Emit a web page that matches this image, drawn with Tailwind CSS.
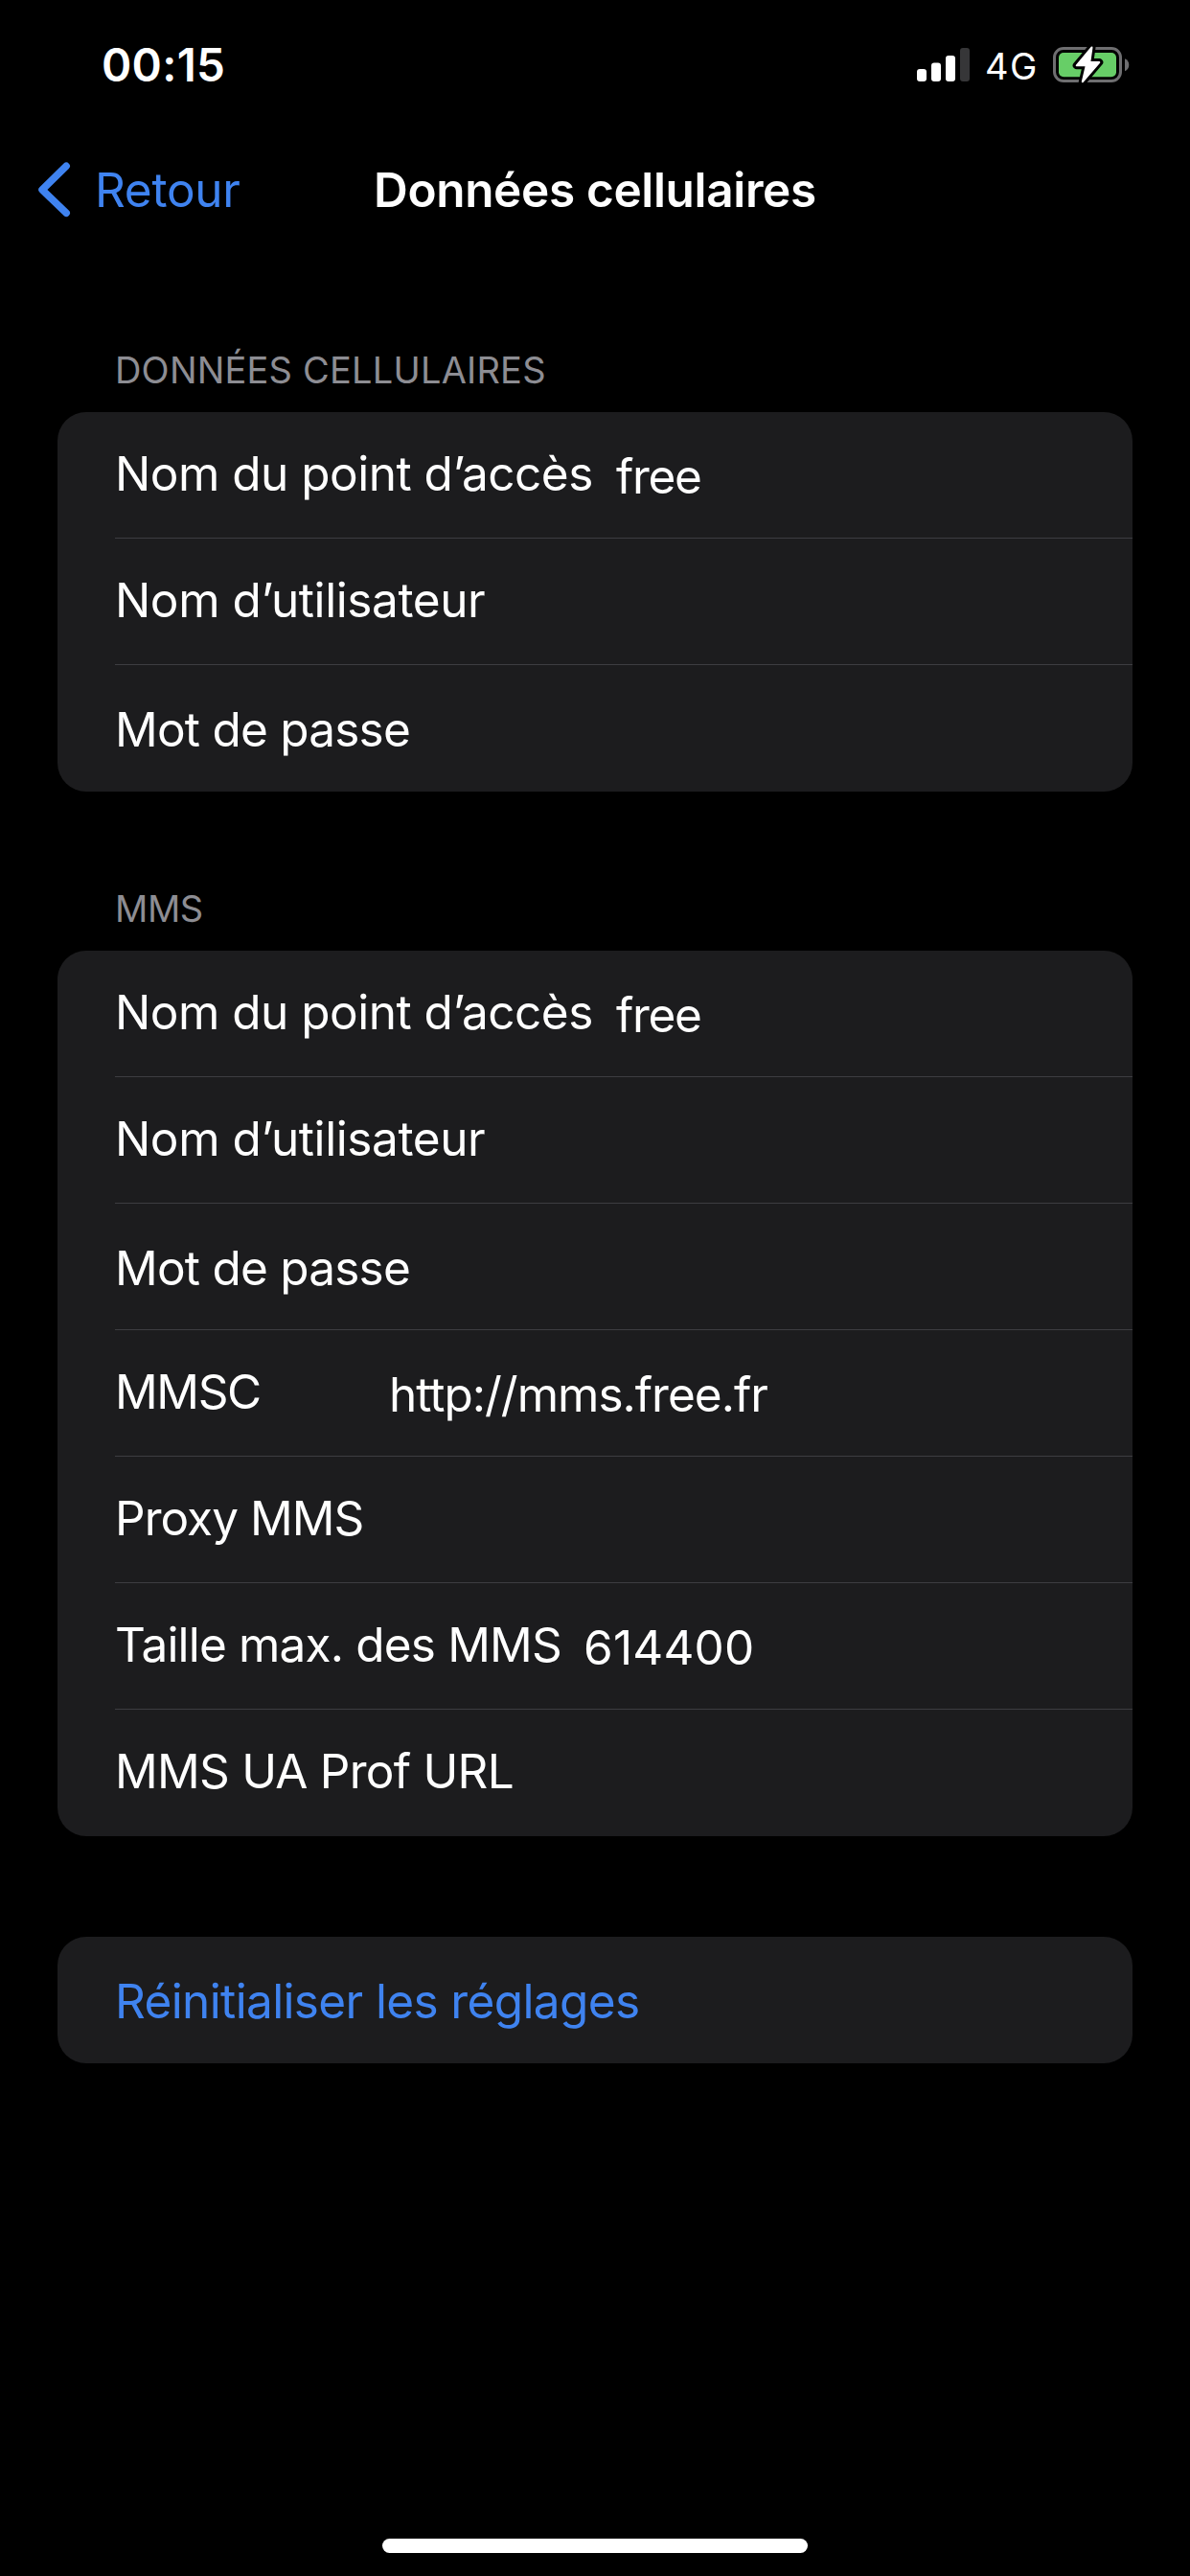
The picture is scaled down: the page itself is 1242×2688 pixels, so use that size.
<!DOCTYPE html>
<html lang="fr">
<head>
<meta charset="utf-8">
<title>Données cellulaires</title>
<script src="https://cdn.jsdelivr.net/npm/@tailwindcss/browser@4"></script>
</head>
<body class="bg-black">
<div class="flex h-[2688px] w-[1242px] flex-col overflow-hidden bg-black font-[Inter,'Liberation_Sans',sans-serif] text-[49.5px] leading-[60px] whitespace-nowrap text-white">

  <!-- Status bar -->
  <header class="flex h-[132px] items-start">
    <div class="mt-[39px] ml-[106px] text-[47.5px] leading-[57px] font-semibold tracking-[0.28px]">00:15</div>
    <svg class="mt-[50px] mr-[16px] ml-auto h-[35px] w-[55px]" viewBox="0 0 55 35">
      <rect x="0" y="22" width="10" height="13" rx="3" fill="#fff"/>
      <rect x="15" y="15.5" width="10" height="19.5" rx="3" fill="#fff"/>
      <rect x="30" y="8" width="10" height="27" rx="3" fill="#fff"/>
      <rect x="45" y="0" width="10" height="35" rx="3" fill="#363638"/>
    </svg>
    <div class="mt-[46px] w-[68px] text-[38px] leading-[46px] tracking-[1.4px]">4G</div>
    <svg class="mt-[46px] mr-[62px] h-[44px] w-[84px]" viewBox="1096 46 84 44">
      <rect x="1100.5" y="50.5" width="69" height="34" rx="9.5" fill="none" stroke="#6e6e70" stroke-width="3"/>
      <rect x="1105" y="55" width="60" height="25.3" rx="5" fill="#67ce67"/>
      <path d="M1174 61.2C1176.600 62.200 1178.300 64.700 1178.300 67.700S1176.600 73.200 1174 74.200Z" fill="#6e6e70"/>
      <path d="M1139.500 49.500 1123.700 68.300H1133.800L1129.800 85.300 1147.300 65H1137.300Z" fill="#000" stroke="#000" stroke-width="8" stroke-linejoin="round"/>
      <path d="M1139.500 49.500 1123.700 68.300H1133.800L1129.800 85.300 1147.300 65H1137.300Z" fill="#fff" stroke="#fff" stroke-width="2" stroke-linejoin="round"/>
    </svg>
  </header>

  <!-- Navigation bar -->
  <nav class="grid h-[231px] grid-cols-[390px_1fr] items-start pt-[36px]">
    <div class="flex items-start pl-[39px] text-[#3f83f0]">
      <svg class="h-[60px] w-[36px]" viewBox="0 0 36 60" fill="none" stroke="currentColor" stroke-width="7.500" stroke-linecap="round" stroke-linejoin="round"><path d="M30.200 5.300 5 30 30.200 54.300"/></svg>
      <span class="ml-[24px] tracking-[-0.27px]">Retour</span>
    </div>
    <h1 class="font-semibold tracking-[-0.34px]">Données cellulaires</h1>
  </nav>

  <main class="flex flex-col px-[60px]">
    <section>
      <h2 class="mb-[21px] pl-[60px] text-[38px] leading-[46px] tracking-[0.2px] text-[#8d8d93]">DONNÉES CELLULAIRES</h2>
      <div class="overflow-hidden rounded-[30px] bg-[#1c1c1e] pl-[60px]">
        <div class="flex h-[132px] border-b border-[#3d3d41] pt-[34px]"><span class="w-[523px] tracking-[-0.5px]">Nom du point d’accès</span><span class="pt-[3px] tracking-[-1.33px]">free</span></div>
        <div class="h-[132px] border-b border-[#3d3d41] pt-[34px] tracking-[-0.42px]">Nom d’utilisateur</div>
        <div class="h-[132px] pt-[37px] tracking-[-0.77px]">Mot de passe</div>
      </div>
    </section>

    <section class="mt-[99px]">
      <h2 class="mb-[21px] pl-[60px] text-[38px] leading-[46px] tracking-[-0.4px] text-[#8d8d93]">MMS</h2>
      <div class="overflow-hidden rounded-[30px] bg-[#1c1c1e] pl-[60px]">
        <div class="flex h-[132px] border-b border-[#3d3d41] pt-[34px]"><span class="w-[523px] tracking-[-0.5px]">Nom du point d’accès</span><span class="pt-[3px] tracking-[-1.33px]">free</span></div>
        <div class="h-[132px] border-b border-[#3d3d41] pt-[34px] tracking-[-0.42px]">Nom d’utilisateur</div>
        <div class="h-[132px] border-b border-[#3d3d41] pt-[37px] tracking-[-0.77px]">Mot de passe</div>
        <div class="flex h-[132px] border-b border-[#3d3d41] pt-[34px]"><span class="w-[286px] tracking-[-1.4px]">MMSC</span><span class="pt-[3px] tracking-[-1px]">http://mms.free.fr</span></div>
        <div class="h-[132px] border-b border-[#3d3d41] pt-[34px] tracking-[-0.96px]">Proxy MMS</div>
        <div class="flex h-[132px] border-b border-[#3d3d41] pt-[34px]"><span class="w-[489px] tracking-[-0.83px]">Taille max. des MMS</span><span class="pt-[3px] tracking-[0.2px]">614400</span></div>
        <div class="h-[132px] pt-[34px] tracking-[-0.74px]">MMS UA Prof URL</div>
      </div>
    </section>

    <div class="mt-[105px] h-[132px] rounded-[30px] bg-[#1c1c1e] pt-[37px] pl-[60px] tracking-[-0.63px] text-[#3f83f0]">Réinitialiser les réglages</div>
  </main>

  <!-- Home indicator -->
  <div class="mx-auto mt-auto mb-[24px] h-[15px] w-[444px] rounded-full bg-white"></div>
</div>
</body>
</html>
